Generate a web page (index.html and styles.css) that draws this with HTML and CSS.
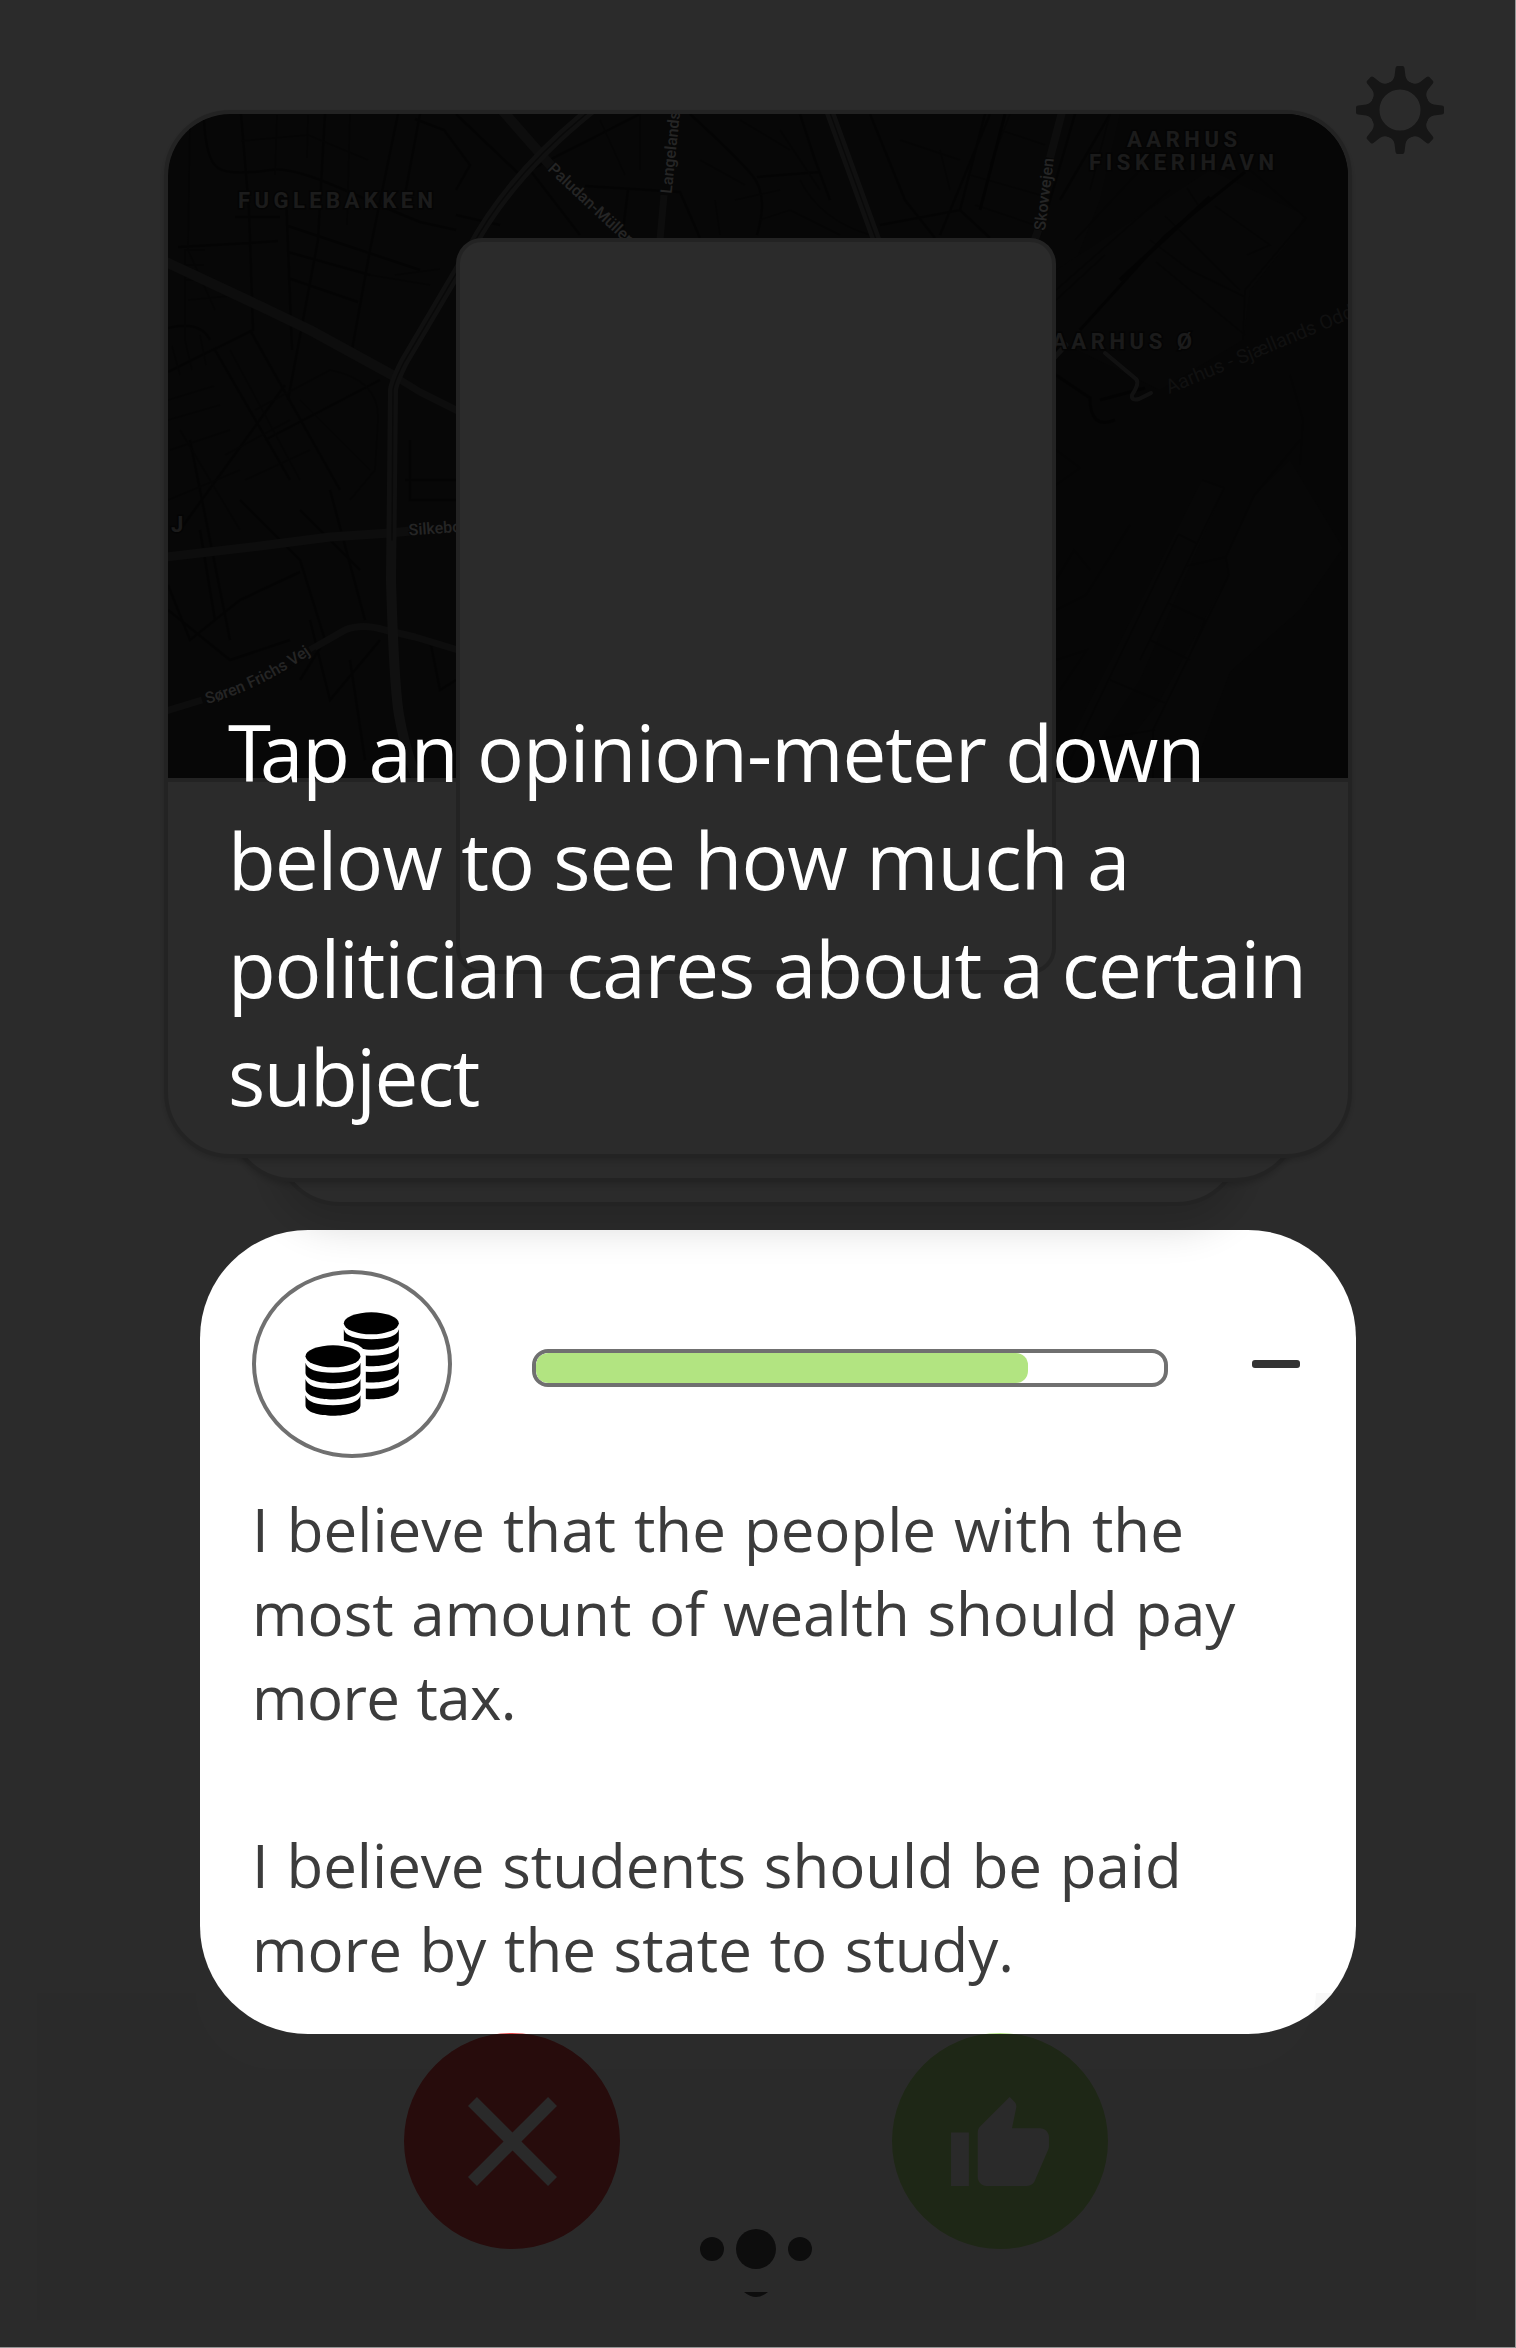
FILE: index.html
```html
<!DOCTYPE html>
<html lang="en">
<head>
<meta charset="utf-8">
<title>Opinion meter</title>
<link rel="stylesheet" href="styles.css">
</head>
<body>
<main class="screen">
  <button class="settings" aria-label="Settings">
    <svg viewBox="-44 -44 88 88" width="88" height="88">
      <defs><path id="tooth" d="M-10 -24L-11.2 -27.1A9.5 9.5 0 0 0 -5.5 -34L-4.5 -42Q-4.3 -44 -2.5 -44H2.5Q4.3 -44 4.5 -42L5.5 -34A9.5 9.5 0 0 0 11.2 -27.1L10 -24Z"/></defs>
      <circle r="25" fill="none" stroke="currentColor" stroke-width="9"/>
      <g fill="currentColor">
        <use href="#tooth"/><use href="#tooth" transform="rotate(45)"/><use href="#tooth" transform="rotate(90)"/><use href="#tooth" transform="rotate(135)"/><use href="#tooth" transform="rotate(180)"/><use href="#tooth" transform="rotate(225)"/><use href="#tooth" transform="rotate(270)"/><use href="#tooth" transform="rotate(315)"/>
      </g>
    </svg>
  </button>

  <section class="deck">
    <div class="card card-third"></div>
    <div class="card card-second"></div>
    <article class="card card-top">
      <svg class="map" viewBox="168 114 1180 664" width="1180" height="664">
        <rect x="168" y="114" width="1180" height="664" fill="#292929"/>
        <path fill="#232323" d="M1120 114L1100 200L1056 310V778H1348V114Z"/>
        <path fill="#292929" d="M1056 270L1210 170L1305 215L1290 240L1250 290L1243 340L1160 390L1056 340ZM1202 480L1224 488L1140 680L1100 740H1070ZM1290 460L1343 548L1300 610L1230 672L1190 778H1100L1160 700L1229 575L1226 556L1255 495Z"/>
        <g fill="none" stroke="#1c1c1c" stroke-width="2.5">
          <path d="M204 120Q206 160 218 168T270 170Q290 166 340 188T420 222L456 230M241 114L249 210L253 330L168 372M325 114L318 240L288 400M398 114L370 250L352 350M420 114L404 200M286 195L292 350M288 226L420 270M288 252L370 275M288 278L358 302M178 247L250 243L278 241M235 217H280M168 328Q200 320 210 340M415 119L444 130L470 165L456 190M456 114L520 175L480 230M500 225L456 215"/>
          <path d="M690 114Q735 155 752 175T757 235M580 235L530 170L640 114M585 186L680 192L700 238M622 238L628 190M800 114L815 160L830 200M870 114L905 200L935 238M940 235L990 114M757 177L820 172M990 238L960 210L880 225M1040 235L1075 114M1060 200L1110 114M985 114L960 210"/>
          <path d="M168 585L190 640L240 600L300 572M240 500L300 560L325 640L300 680M190 440L230 640M215 350L290 480M250 330L340 490M285 385L180 530M265 440L380 380M168 610L230 660L290 640M330 490L365 620M300 510L360 570M310 620L330 700L380 640M350 660L365 760M405 480H456M410 440V500H456M430 640L440 690L456 680M200 530L215 620"/>
        </g>
        <g fill="none" stroke="#1f1f1f" stroke-width="1.5">
          <path d="M241 141L308 135M275 175L277 115M308 115L307 158M308 135L368 160M350 114L347 225M190 120L188 250L215 310M205 250H185V340M185 265H204M185 280H206M172 346L180 375M185 340L192 370M200 335L206 365M188 300L240 295M395 275L440 269M370 275L430 285M168 400L214 386M168 420L220 405M230 350L300 480M168 500L240 470M255 410L330 370Q380 380 378 420L375 470L350 500M300 400L370 470M225 455L290 420M245 480L310 450M170 450L230 430M180 430L240 530"/>
          <path d="M640 114L640 170M600 120L625 175M700 160L745 185M715 200L720 235M735 200L780 190M760 220L790 210L840 235M800 180Q820 220 870 235M780 130L820 190M740 120L790 150M900 140L960 160M940 150L950 190M1010 114L990 165M970 175L1040 195M1000 130L1045 145M975 205L1035 225M1090 190L1110 114M1075 240L1140 170"/>
          <path d="M1165 216L1240 290M1187 188L1200 208M1150 240L1190 270L1245 297M1215 206L1270 245L1247 255M1250 170L1306 218L1245 290L1243 340M1156 262L1245 335M1056 300L1105 255M1056 290L1170 190M1290 375L1303 420L1300 465M1178 534L1196 543M1202 480L1224 488L1140 660M1178 535L1070 760M1168 603L1205 620L1188 659M1150 640L1190 660M1110 680L1165 703M1105 738L1155 730M1187 566L1226 557L1229 575L1153 730V778M1226 557L1254 496L1300 440M1056 580L1074 550L1090 570M1056 610L1086 595L1130 525M1056 450L1080 468L1056 485M1056 660L1087 650L1060 690"/>
        </g>
        <g fill="none" stroke="#161616" stroke-width="4">
          <path d="M1080 330L1165 236L1245 172M1056 375L1090 398Q1090 430 1115 420M1100 400L1145 388M980 210L1005 114" stroke-width="3"/>
          <path d="M1120 280L1210 197"/>
        </g>
        <g fill="none" stroke="#4c4c4c" stroke-linejoin="round">
          <path d="M166 262L260 306L310 330L394 376" stroke-width="10"/>
          <path d="M394 376L420 392L458 411" stroke-width="7"/>
          <path d="M502 110L551 166" stroke-width="10"/>
          <path d="M166 557L260 546L330 537L390 533L410 531" stroke-width="9"/>
          <path d="M166 711L202 700M310 650L345 630Q362 623 385 630L415 637L458 650" stroke-width="7"/>
          <path d="M664 195L660 240" stroke-width="7"/>
          <path d="M1062 112L1050 158M1039 228L1034 242" stroke-width="8"/>
        </g>
        <g fill="none" stroke="#666" stroke-linejoin="round" stroke-linecap="round">
          <path d="M417 780Q404 745 399 715T391 580L393 390Q394 382 404 362L470 250Q510 175 591 110" stroke-width="10" stroke="#606060"/>
          <path d="M829 110L877 242" stroke-width="10" stroke="#606060"/>
          <path d="M392 540L393 390Q394 382 404 362L470 250Q510 175 591 110M829 110L877 242" stroke="#383838" stroke-width="1.5"/>
          <path d="M1105 353L1136 379Q1140 383 1132 395Q1131 401 1139 399L1151 393" stroke-width="4"/>
          <path d="M1054 358L1066 345" stroke-width="5"/>
        </g>
        <g class="district">
          <text x="238" y="208" textLength="195">FUGLEBAKKEN</text>
          <text x="1127" y="147" textLength="110">AARHUS</text>
          <text x="1089" y="169.500" textLength="185">FISKERIHAVN</text>
          <text x="1052" y="349" textLength="140">AARHUS Ø</text>
          <text x="171" y="532">J</text>
        </g>
        <g class="street">
          <text transform="translate(409 535.500) rotate(-4)">Silkeborgvej</text>
          <path id="soren" fill="none" d="M207 704Q262 689 316 650"/>
          <text><textPath href="#soren">Søren Frichs Vej</textPath></text>
          <text transform="translate(547 170) rotate(43)">Paludan-Müllers Vej</text>
          <text transform="translate(671.500 194) rotate(-84)">Langelands</text>
          <text transform="translate(1045 231) rotate(-83)">Skovvejen</text>
        </g>
        <text class="ferry" transform="translate(1169 394) rotate(-22.500)">Aarhus - Sjællands Odd</text>
      </svg>
      <div class="portrait"></div>
    </article>
  </section>

  <section class="meter">
    <header class="meter-row">
      <span class="topic">
        <svg viewBox="315 275 283 313" width="94.300" height="104.300">
          <defs><path id="coin" d="M-82.500 0Q-75 30 0 30T82.500 0V30C82.500 72 -82.500 72 -82.500 30Z"/></defs>
          <g>
            <ellipse cx="514" cy="309" rx="82.500" ry="33"/>
            <use href="#coin" x="514" y="327"/><use href="#coin" x="514" y="376"/><use href="#coin" x="514" y="425"/><use href="#coin" x="514" y="475"/>
          </g>
          <path d="M316.500 407C316.500 364 481.500 364 481.500 407V555C481.500 598 316.500 598 316.500 555Z" fill="#fff" stroke="#fff" stroke-width="32"/>
          <g>
            <ellipse cx="399" cy="408" rx="82.500" ry="33"/>
            <use href="#coin" x="399" y="427"/><use href="#coin" x="399" y="476"/><use href="#coin" x="399" y="525"/>
          </g>
        </svg>
      </span>
      <span class="bar"><span class="bar-fill"></span></span>
      <button class="collapse" aria-label="Collapse"></button>
    </header>
    <div class="statements">
      <p><span class="s1">I believe that the people with the</span><span class="s2">most amount of wealth should pay</span><span class="s3">more tax.</span></p>
      <p><span class="s4">I believe students should be paid</span><span class="s5">more by the state to study.</span></p>
    </div>
  </section>

  <section class="actions">
    <button class="round no" aria-label="Disagree">
      <svg viewBox="5 5 14 14" width="89" height="89" fill="currentColor"><path d="M19 6.410L17.590 5 12 10.590 6.410 5 5 6.410 10.590 12 5 17.590 6.410 19 12 13.410 17.590 19 19 17.590 13.410 12z"/></svg>
    </button>
    <button class="round yes" aria-label="Agree">
      <svg viewBox="1 1 22 20" width="98" height="89" fill="currentColor"><path d="M1 21h4V9H1v12zm22-11c0-1.100-.9-2-2-2h-6.310l.95-4.570.03-.32c0-.41-.17-.79-.44-1.060L14.170 1 7.590 7.590C7.220 7.950 7 8.450 7 9v10c0 1.100.9 2 2 2h9c.83 0 1.540-.5 1.840-1.220l3.020-7.050c.09-.23.14-.47.14-.73v-2z"/></svg>
    </button>
    <div class="pager">
      <svg viewBox="700 2229 112 70" width="112" height="70" fill="currentColor"><circle cx="712" cy="2249" r="12"/><circle cx="756" cy="2249" r="20"/><circle cx="800" cy="2249" r="12"/><path d="M744 2292H768Q756 2302 744 2292Z"/></svg>
    </div>
  </section>

  <div class="coach">
    <div class="spotlight"></div>
    <p class="hint"><span class="h1"><b>T</b>ap an opinion-meter down</span><span class="h2">below to see how much a</span><span class="h3">politician cares about a certain</span><span class="h4">subject</span></p>
  </div>
</main>
</body>
</html>
```
FILE: styles.css
```css
* { box-sizing: border-box; }
body { margin: 0; background: #959595; font-family: "Open Sans", "Noto Sans", sans-serif; }
button { border: 0; padding: 0; background: none; }
svg { display: block; }

.screen {
  position: relative;
  width: 1515px;
  height: 2347px;
  overflow: hidden;
  background: #fff;
  display: flex;
  flex-direction: column;
}

.settings { position: absolute; left: 1356px; top: 66px; width: 88px; height: 88px; color: #818181; z-index: 3; }

/* stacked profile cards */
.deck { position: relative; z-index: 2; flex: none; width: 1188px; height: 1048px; margin: 110px 0 0 164px; }
.card { background: #fbfbfb; border: 4px solid #cfcfcf; border-radius: 66px; box-shadow: 0 3px 6px rgba(0, 0, 0, .16); }
.card-top { position: relative; height: 100%; overflow: hidden; display: flex; flex-direction: column; align-items: center; }
.card-top .map { flex: none; border-bottom: 4px solid #cfcfcf; box-sizing: content-box; }
.card-second { position: absolute; left: 63px; right: 51px; top: 100px; bottom: -24px; }
.card-third { position: absolute; left: 110px; right: 109px; top: 200px; bottom: -48px; box-shadow: 0 20px 40px rgba(0, 0, 0, .16); }
.portrait { position: absolute; left: 288px; top: 124px; width: 600px; height: 736px; border: 4px solid #cfcfcf; border-radius: 26px; background: #fbfbfb; }

.district { font: 700 22px Roboto, sans-serif; fill: #a0a0a0; stroke: #1a1a1a; stroke-width: 3px; paint-order: stroke; }
.street { font: 500 16px Roboto, sans-serif; fill: #d8d8d8; stroke: #292929; stroke-width: 2px; paint-order: stroke; }
.ferry { font: 19.5px Roboto, sans-serif; fill: #606060; }

/* opinion meter */
.meter {
  position: relative;
  z-index: 1;
  flex: none;
  width: 1120px;
  height: 839px;
  margin: 72px 0 0 196px;
  padding: 40px 16px 0 56px;
  background: #fff;
  border-radius: 0 0 78px 78px;
}
.meter-row { display: flex; align-items: center; height: 188px; }
.topic { width: 200px; height: 188px; border: 4px solid #707070; border-radius: 50%; display: flex; align-items: center; justify-content: center; }
.bar { width: 636px; height: 38px; margin: 7px 0 0 80px; border: 4px solid #707070; border-radius: 16px; overflow: hidden; }
.bar-fill { display: block; width: 492px; height: 100%; border-radius: 12px; background: #b2e481; }
.collapse { width: 48px; height: 8px; margin-left: 84px; border-radius: 3px; background: #333; }
.statements { margin-top: 29px; color: #3c3c3c; font-size: 60px; line-height: 84px; white-space: nowrap; word-spacing: 2.1px; }
.statements p { margin: 0 0 84px; }
.statements span, .hint span { display: block; }
.statements .s1 { word-spacing: 2.5px; }
.statements .s3 { letter-spacing: -.6px; }

/* actions */
.actions { position: relative; flex: none; width: 1439px; height: 327px; margin: -76px 0 0 37px; padding: 40px 0 0 367px; display: flex; align-items: flex-start; gap: 272px; background: #f8f8f8; }
.actions .round, .pager { z-index: 2; }
.round { width: 216px; height: 216px; border-radius: 50%; display: flex; align-items: center; justify-content: center; color: #f6f6f6; }
.no { background: #e34646; }
.yes { background: #b2e481; }
.pager { position: absolute; left: 663px; top: 236px; color: #4c4c4c; }

/* walkthrough layer */
.coach { position: absolute; inset: 0; z-index: 5; overflow: hidden; }
.spotlight { position: absolute; left: 200px; top: 1230px; width: 1156px; height: 804px; border-radius: 108px; box-shadow: 0 0 0 3000px rgba(0, 0, 0, .83); }
.hint { position: relative; margin: 698px 0 0 228px; color: #fff; font-size: 78px; line-height: 108px; white-space: nowrap; }
.hint b { font-weight: 400; letter-spacing: -11px; }
.hint .h1 { letter-spacing: -.95px; }
.hint .h2 { letter-spacing: -.95px; }
.hint .h3 { letter-spacing: -1.1px; }
.hint .h4 { letter-spacing: -1.5px; }
```
